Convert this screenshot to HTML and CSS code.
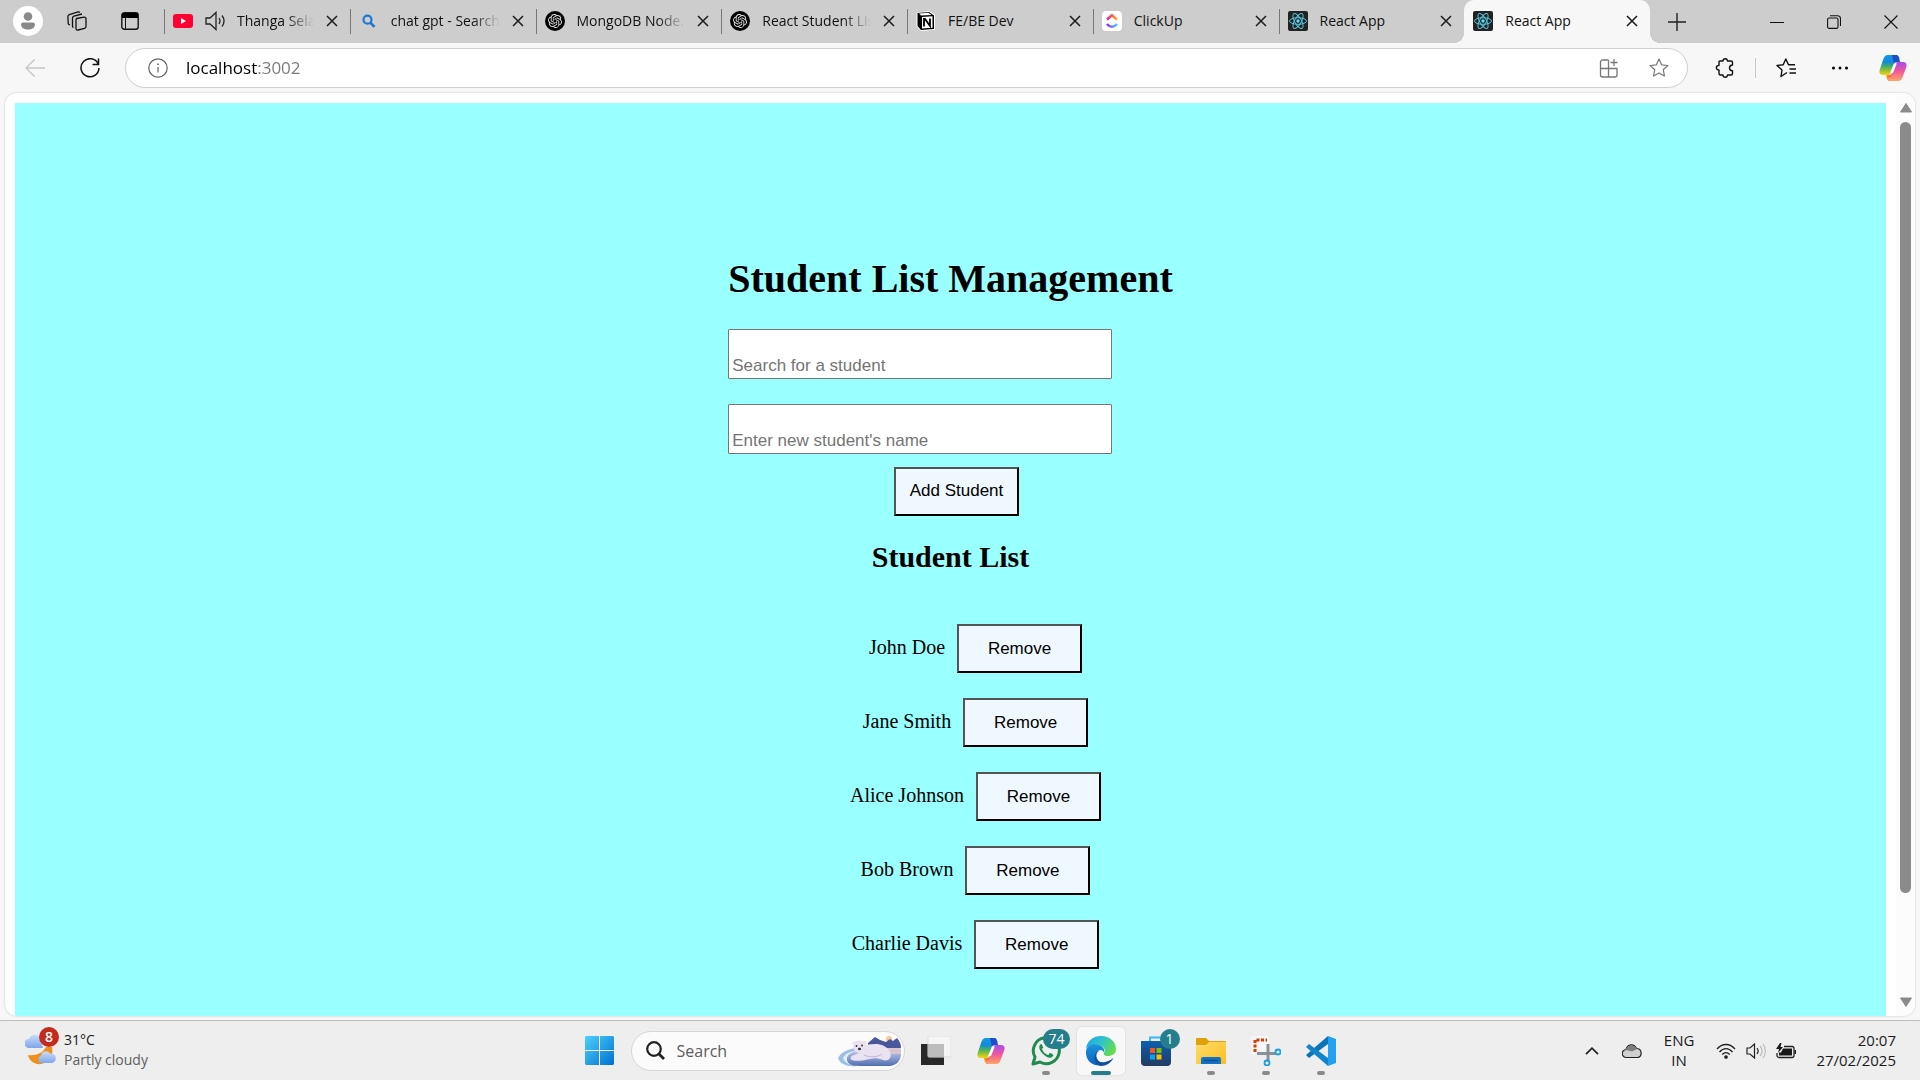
FILE: index.html
```html
<!DOCTYPE html>
<html lang="en">
<head>
<meta charset="utf-8">
<title>React App</title>
<link rel="stylesheet" href="styles.css">
</head>
<body>
<svg class="defs" aria-hidden="true">
  <defs>
    <linearGradient id="cp-blue" x1="0" y1="0" x2="0" y2="1"><stop offset="0" stop-color="#1696ea"/><stop offset=".35" stop-color="#0f8bd8"/><stop offset=".6" stop-color="#4cb25c"/><stop offset="1" stop-color="#f8d30a"/></linearGradient>
    <linearGradient id="cp-pink" x1="0" y1="0" x2="0" y2="1"><stop offset="0" stop-color="#a64cf0"/><stop offset=".5" stop-color="#f2589a"/><stop offset="1" stop-color="#ffa665"/></linearGradient>
    <linearGradient id="cp-red" x1="0" y1="0" x2="1" y2="0"><stop offset="0" stop-color="#f8a01c"/><stop offset="1" stop-color="#e8404c"/></linearGradient>
    <linearGradient id="win" x1="0" y1="0" x2="1" y2="1"><stop offset="0" stop-color="#4fd0fb"/><stop offset="1" stop-color="#0070d0"/></linearGradient>
    <linearGradient id="edge-top" x1="0" y1="0" x2="1" y2=".5"><stop offset="0" stop-color="#1b9de2"/><stop offset=".5" stop-color="#2cc3d0"/><stop offset="1" stop-color="#64dc50"/></linearGradient>
    <linearGradient id="edge-left" x1="0" y1="0" x2="0" y2="1"><stop offset="0" stop-color="#1a96dd"/><stop offset="1" stop-color="#0c62c4"/></linearGradient>
    <linearGradient id="store" x1="0" y1="0" x2="0" y2="1"><stop offset="0" stop-color="#0c5fae"/><stop offset="1" stop-color="#233a63"/></linearGradient>
    <linearGradient id="folder" x1="0" y1="0" x2="1" y2="1"><stop offset="0" stop-color="#ffdd6e"/><stop offset="1" stop-color="#fbbd1a"/></linearGradient>
    <linearGradient id="cloud" x1="0" y1="0" x2="0" y2="1"><stop offset="0" stop-color="#c9dcfa"/><stop offset="1" stop-color="#7ea7e8"/></linearGradient>
    <linearGradient id="click-top" x1="0" y1="0" x2="1" y2="0"><stop offset="0" stop-color="#f0189a"/><stop offset="1" stop-color="#ffb21a"/></linearGradient>
    <linearGradient id="click-bottom" x1="0" y1="0" x2="1" y2="0"><stop offset="0" stop-color="#8930fd"/><stop offset="1" stop-color="#49ccf9"/></linearGradient>
    <linearGradient id="sky" x1="0" y1="0" x2="0" y2="1"><stop offset="0" stop-color="#ccd4f0"/><stop offset=".5" stop-color="#93a4d4"/><stop offset="1" stop-color="#4f6fae"/></linearGradient>
    <symbol id="close" viewBox="0 0 12 12"><path d="M1 1l10 10M11 1L1 11" fill="none" stroke="currentColor" stroke-width="1.5"/></symbol>
    <symbol id="openai" viewBox="0 0 20 20">
      <circle cx="10" cy="10" r="10" fill="#000"/>
      <path transform="translate(3 3) scale(.583)" fill="#e4e4e4" d="M22.2819 9.8211a5.9847 5.9847 0 0 0-.5157-4.9108 6.0462 6.0462 0 0 0-6.5098-2.9A6.0651 6.0651 0 0 0 4.9807 4.1818a5.9847 5.9847 0 0 0-3.9977 2.9 6.0462 6.0462 0 0 0 .7427 7.0966 5.98 5.98 0 0 0 .511 4.9107 6.051 6.051 0 0 0 6.5146 2.9001A5.9847 5.9847 0 0 0 13.2599 24a6.0557 6.0557 0 0 0 5.7718-4.2058 5.9894 5.9894 0 0 0 3.9977-2.9001 6.0557 6.0557 0 0 0-.7475-7.0729zm-9.022 12.6081a4.4755 4.4755 0 0 1-2.8764-1.0408l.1419-.0804 4.7783-2.7582a.7948.7948 0 0 0 .3927-.6813v-6.7369l2.02 1.1686a.071.071 0 0 1 .038.052v5.5826a4.504 4.504 0 0 1-4.4945 4.4944zm-9.6607-4.1254a4.4708 4.4708 0 0 1-.5346-3.0137l.142.0852 4.783 2.7582a.7712.7712 0 0 0 .7806 0l5.8428-3.3685v2.3324a.0804.0804 0 0 1-.0332.0615L9.74 19.9502a4.4992 4.4992 0 0 1-6.1408-1.6464zM2.3408 7.8956a4.485 4.485 0 0 1 2.3655-1.9728V11.6a.7664.7664 0 0 0 .3879.6765l5.8144 3.3543-2.0201 1.1685a.0757.0757 0 0 1-.071 0l-4.8303-2.7865A4.504 4.504 0 0 1 2.3408 7.872zm16.5963 3.8558L13.1038 8.364 15.1192 7.2a.0757.0757 0 0 1 .071 0l4.8303 2.7913a4.4944 4.4944 0 0 1-.6765 8.1042v-5.6772a.79.79 0 0 0-.407-.667zm2.0107-3.0231l-.142-.0852-4.7735-2.7818a.7759.7759 0 0 0-.7854 0L9.409 9.2297V6.8974a.0662.0662 0 0 1 .0284-.0615l4.8303-2.7866a4.4992 4.4992 0 0 1 6.6802 4.66zM8.3065 12.863l-2.02-1.1638a.0804.0804 0 0 1-.038-.0567V6.0742a4.4992 4.4992 0 0 1 7.3757-3.4537l-.142.0805L8.704 5.459a.7948.7948 0 0 0-.3927.6813zm1.0976-2.3654l2.602-1.4998 2.6069 1.4998v2.9994l-2.5974 1.4997-2.6067-1.4997Z"/>
    </symbol>
    <symbol id="react" viewBox="0 0 20 20">
      <rect width="20" height="20" rx="2" fill="#222"/>
      <g fill="none" stroke="#56c5df" stroke-width="1"><ellipse cx="10" cy="10" rx="8.500" ry="3.300"/><ellipse cx="10" cy="10" rx="8.500" ry="3.300" transform="rotate(60 10 10)"/><ellipse cx="10" cy="10" rx="8.500" ry="3.300" transform="rotate(120 10 10)"/></g>
      <circle cx="10" cy="10" r="1.700" fill="#61dafb"/>
    </symbol>
    <symbol id="copilot" viewBox="0 0 28 26">
      <path d="M17 0h-8C6 0 5 2 4 5L1 14c-1.500 4 0 6 3 6h5c2 0 3-1.500 4-5l2.500-8c.8-2.500 2-3 4-3h1C19.500 1.500 19 0 17 0z" fill="url(#cp-blue)"/>
      <path d="M13 0h4c2.500 0 3 2 4 7h-3c-2 0-2.500 1-3 2z" fill="#1c4fc9"/>
      <path d="M15 26h-4c-2.500 0-3-2-4-6h3c2 0 2.600-1 3-2z" fill="url(#cp-red)"/>
      <path d="M11 26h8c3 0 4-2 5-5l3-8c1.500-4 0-6-3-6h-5c-2 0-3 1.500-4 5l-2.500 8c-.8 2.500-2 3-4 3H8c.8 2 1.500 3 3 3z" fill="url(#cp-pink)"/>
      <path d="M15 8.500h2.800L14 18h-3z" fill="#fff"/>
    </symbol>
    <symbol id="star" viewBox="0 0 20 20"><path d="M10 1l2.600 5.800 6.300.7-4.700 4.200 1.300 6.300L10 14.900 4.500 18l1.300-6.300L1.100 7.500l6.300-.7z" fill="none" stroke="currentColor" stroke-width="1.200" stroke-linejoin="round"/></symbol>
  </defs>
</svg>

<div class="browser">
  <header class="tabstrip">
    <div class="tab-tools">
      <button class="avatar" aria-label="Profile"><svg width="14" height="18" viewBox="0 0 14 18"><circle cx="7" cy="4.500" r="4.300" fill="#8a8a8a"/><path d="M2 10.500h10c1 0 2 .8 2 2 0 3-3 5-7 5s-7-2-7-5c0-1.200 1-2 2-2z" fill="#8a8a8a"/></svg></button>
      <button class="plain" aria-label="Workspaces"><svg width="20" height="20" viewBox="0 0 20 20" fill="none" stroke="#111" stroke-width="1.300"><path d="M9.500 7.500l7.500-1.400c1-.2 2 .5 2 1.500v8c0 .8-.5 1.500-1.400 1.700L11 19c-1 .2-2-.6-2-1.600V9z"/><path d="M6.500 16.500c-.7-.2-1-.8-1-1.500V7c0-1 .5-1.600 1.400-1.900L15 3"/><path d="M3 14c-.6-.2-1.500-.8-1.800-1.500L.9 5.500c0-1 .5-1.600 1.400-1.900L11 1c.8-.2 1.500.2 1.800.8"/></svg></button>
      <button class="plain" aria-label="Tab actions"><svg width="18" height="18" viewBox="0 0 18 18"><rect x=".8" y=".8" width="16.400" height="16.400" rx="2.500" fill="none" stroke="#111" stroke-width="1.400"/><path d="M1 6V3a2 2 0 0 1 2-2h12a2 2 0 0 1 2 2v3z" fill="#000"/><path d="M4.500 6v11" stroke="#111"/></svg></button>
    </div>
    <nav class="tabs" aria-label="Tabs">
      <div class="tab"><svg class="favicon" viewBox="0 0 20 20"><rect y="3" width="20" height="14" rx="3" fill="#ff0033"/><path d="M8 7v6l5-3z" fill="#fff"/></svg><svg class="favicon" viewBox="0 0 20 20" fill="none" stroke="#222" stroke-width="1.300"><path d="M1 7h4l6-5.500v17L5 13H1z"/><path d="M14 7c1.300 2 1.300 4 0 6M17 4.500c2.600 3.500 2.600 7.500 0 11"/></svg><span class="title fade">Thanga Sela</span><button class="plain" aria-label="Close tab"><svg class="x"><use href="#close"/></svg></button></div>
      <div class="tab"><svg class="favicon" viewBox="0 0 20 20" fill="none" stroke="#1a78d0" stroke-width="2.200"><circle cx="8.500" cy="8.700" r="4"/><path d="M11.500 11.800l4 4" stroke-width="2.600"/></svg><span class="title fade">chat gpt - Search</span><button class="plain" aria-label="Close tab"><svg class="x"><use href="#close"/></svg></button></div>
      <div class="tab"><svg class="favicon"><use href="#openai"/></svg><span class="title fade">MongoDB Node.</span><button class="plain" aria-label="Close tab"><svg class="x"><use href="#close"/></svg></button></div>
      <div class="tab"><svg class="favicon"><use href="#openai"/></svg><span class="title fade">React Student Lis</span><button class="plain" aria-label="Close tab"><svg class="x"><use href="#close"/></svg></button></div>
      <div class="tab"><svg class="favicon" viewBox="0 0 20 20"><path d="M1 2l12-1.500L18.500 4v14.500L5 19.500 1 15z" fill="#fff" stroke="#fff"/><path d="M1.500 2L13 1l5 3.500V18L5 19l-3.500-4z" fill="#000"/><path d="M3 2.500l9.500-.8 3 2.200-10.500.7zM6 6l10.500-.7v11.500L6 17.500z" fill="#fff"/><path d="M8 15.500V8h1l5 7V7.500" fill="none" stroke="#000" stroke-width="1.800"/></svg><span class="title">FE/BE Dev</span><button class="plain" aria-label="Close tab"><svg class="x"><use href="#close"/></svg></button></div>
      <div class="tab"><svg class="favicon" viewBox="0 0 20 20"><rect width="20" height="20" rx="4" fill="#fff"/><path d="M5 8.500l5-4.300 5 4.300" fill="none" stroke="url(#click-top)" stroke-width="2.600"/><path d="M5 13c3 3.600 7 3.600 10 0" fill="none" stroke="url(#click-bottom)" stroke-width="2.600"/></svg><span class="title">ClickUp</span><button class="plain" aria-label="Close tab"><svg class="x"><use href="#close"/></svg></button></div>
      <div class="tab"><svg class="favicon"><use href="#react"/></svg><span class="title">React App</span><button class="plain" aria-label="Close tab"><svg class="x"><use href="#close"/></svg></button></div>
      <div class="tab active"><svg class="favicon"><use href="#react"/></svg><span class="title">React App</span><button class="plain" aria-label="Close tab"><svg class="x"><use href="#close"/></svg></button></div>
    </nav>
    <button class="plain new-tab" aria-label="New tab"><svg width="18" height="18" viewBox="0 0 18 18"><path d="M9 0v18M0 9h18" stroke="#222" stroke-width="1.400"/></svg></button>
    <div class="window-controls">
      <button class="plain" aria-label="Minimize"><svg width="14" height="14" viewBox="0 0 14 14"><path d="M0 7.500h14" stroke="#111"/></svg></button>
      <button class="plain" aria-label="Restore"><svg width="14" height="14" viewBox="0 0 14 14" fill="none" stroke="#111" stroke-width="1.100"><rect x=".6" y="3" width="10.400" height="10.400" rx="1.500"/><path d="M3 .7h7.500a3 3 0 0 1 3 3V11"/></svg></button>
      <button class="plain" aria-label="Close window"><svg width="14" height="14" viewBox="0 0 14 14"><path d="M.5.5l13 13M13.500.5l-13 13" stroke="#111" stroke-width="1.100"/></svg></button>
    </div>
  </header>

  <div class="toolbar">
    <div class="nav-buttons">
      <button class="plain" aria-label="Back"><svg width="20" height="20" viewBox="0 0 20 20" fill="none" stroke="#c6c6c6" stroke-width="1.300"><path d="M20 10H1M9.500 1.500L1 10l8.500 8.500"/></svg></button>
      <button class="plain" aria-label="Refresh"><svg width="20" height="20" viewBox="0 0 20 20" fill="none" stroke="#111" stroke-width="1.500"><path d="M18.200 6A9 9 0 1 0 19 10M18.500.5V6.500H12.500"/></svg></button>
    </div>
    <div class="address">
      <svg width="20" height="20" viewBox="0 0 20 20" fill="none" stroke="#666" stroke-width="1.200"><circle cx="10" cy="10" r="9.200"/><path d="M10 9v5.500"/><path d="M10 5.500v1.600" stroke-width="1.600"/></svg>
      <input class="url" type="text" aria-label="Address" value="localhost:3002">
      <button class="plain" aria-label="Install app"><svg width="20" height="20" viewBox="0 0 20 20" fill="none" stroke="#777" stroke-width="1.300"><path d="M9.500 2H3.500A2 2 0 0 0 1.500 4v13a2 2 0 0 0 2 2H16a2 2 0 0 0 2-2v-6.500H1.500M9.500 2v17M15 1v7M11.500 4.500h7"/></svg></button>
      <button class="plain" aria-label="Add to favorites"><svg class="muted" width="20" height="20"><use href="#star"/></svg></button>
    </div>
    <div class="tools">
      <button class="plain" aria-label="Extensions"><svg width="20" height="20" viewBox="0 0 20 20" fill="none" stroke="#111" stroke-width="1.400" stroke-linejoin="round"><path d="M5 3h3c.2-3 4.300-3 4.500 0H16a1.500 1.500 0 0 1 1.500 1.500V7c-4 .3-4 5.500 0 5.800V15.500A1.500 1.500 0 0 1 16 17h-3.500c-.2 3-4.300 3-4.500 0H5.500A1.500 1.500 0 0 1 4 15.500V12c-3.500 0-3.500-4.600 0-4.600V4a1 1 0 0 1 1-1z"/></svg></button>
      <span class="divider"></span>
      <button class="plain" aria-label="Favorites"><svg width="20" height="20" viewBox="0 0 20 20" fill="none" stroke="#111" stroke-width="1.400"><path d="M11 14.500L5 18.500l1-6.500L1 7.500l6.200-.7L9.800 1l2.700 5.800H19M13.500 11H20M13.500 15H20" stroke-linejoin="round"/></svg></button>
      <button class="plain more" aria-label="Settings and more"><svg width="18" height="18" viewBox="0 0 18 18"><circle cx="2.500" cy="9" r="1.500"/><circle cx="9" cy="9" r="1.500"/><circle cx="15.500" cy="9" r="1.500"/></svg></button>
      <button class="plain" aria-label="Copilot"><svg width="28" height="26"><use href="#copilot"/></svg></button>
    </div>
  </div>

  <div class="viewport">
    <main class="page">
      <div class="app">
        <h1>Student List Management</h1>
        <input class="field" type="text" aria-label="Search for a student" placeholder="Search for a student">
        <input class="field" type="text" aria-label="New student's name" placeholder="Enter new student's name">
        <button class="btn add">Add Student</button>
        <h2>Student List</h2>
        <ul class="students">
          <li>John Doe<button class="btn">Remove</button></li>
          <li>Jane Smith<button class="btn">Remove</button></li>
          <li>Alice Johnson<button class="btn">Remove</button></li>
          <li>Bob Brown<button class="btn">Remove</button></li>
          <li>Charlie Davis<button class="btn">Remove</button></li>
        </ul>
      </div>
    </main>
    <div class="scrollbar" aria-hidden="true">
      <svg width="12" height="10" viewBox="0 0 12 10"><path d="M6 .5L11.500 9H.5z" fill="#8b8b8b" stroke="#8b8b8b" stroke-linejoin="round"/></svg>
      <div class="track"><div class="thumb"></div></div>
      <svg width="12" height="10" viewBox="0 0 12 10"><path d="M6 9.500L11.500 1H.5z" fill="#8b8b8b" stroke="#8b8b8b" stroke-linejoin="round"/></svg>
    </div>
  </div>
</div>

<footer class="taskbar">
  <button class="plain weather">
    <span class="badged"><svg width="32" height="34" viewBox="0 0 32 34"><path d="M3 24c8 1 15-2 18-8h6c2 9-3 16-11 17C9 34 4 29 3 24z" fill="#f0901c"/><path d="M4 17a4.500 4.500 0 0 1 0-9 6 6 0 0 1 11-1l3 10z" fill="url(#cloud)"/><path d="M16 32a4 4 0 0 1 0-7.500 5 5 0 0 1 9-2 4.500 4.500 0 0 1 2 9.500z" fill="url(#cloud)"/></svg><span class="badge alert">8</span></span>
    <span class="stack"><span>31°C</span><span class="dim">Partly cloudy</span></span>
  </button>
  <div class="apps">
    <button class="plain slot" aria-label="Start"><svg width="29" height="29" viewBox="0 0 29 29" fill="url(#win)"><path d="M1 0h13v14H0V1zM15 0h13l1 1v13H15zM0 15h14v14H1l-1-1zM15 15h14v13l-1 1H15z"/></svg></button>
    <div class="search">
      <svg width="19" height="19" viewBox="0 0 19 19" fill="none" stroke="#222" stroke-width="2.200"><circle cx="8" cy="8" r="6.800"/><path d="M13 13l5 5" stroke-width="2.800"/></svg>
      <input class="search-input" type="text" aria-label="Search" placeholder="Search">
      <svg width="64" height="32" viewBox="0 0 64 32"><path d="M0 23c3-6 10-9 18-10v18C9 32 2 29 0 23z" fill="#9dbfe6"/><path d="M5 23c3-5 8-7 14-7v14C11 30 7 28 5 23z" fill="#e4effb"/><path d="M20 16c4-1 8-3 12-3h30c1 2 1 4 1 6 0 7-5 12-12 12H22C13 31 8 28 9 23c1-4 5-6 11-7z" fill="url(#sky)"/><path d="M44 13h18.500c.5 2 .5 4 .5 6H46z" fill="#d9c3cf"/><circle cx="51" cy="4" r="3" fill="#f6c998"/><path d="M30 8l7-6 5 3 6 2 4-3 3 2 4-3c3 3 4 7 4 10H30z" fill="#4a569c"/><path d="M15 10c-1-2 0-4 2-3.500 3-1.500 6-1.500 8 0 3-1.500 5 1 3 3.500 6-1 13-2 18 1 6 3 8 9 6 12-1 2-4 3-7 2-5-2-9-2-13-1-6 1-12 3-18 1-2-1-2-4 2-5l5-2c-4-1-6-4-6-8z" fill="#ebe2f1"/><path d="M26 20c6 3 14 2 18-1" fill="none" stroke="#c5b4d6"/><circle cx="18.500" cy="11" r=".9" fill="#333"/><circle cx="24" cy="10.500" r=".9" fill="#333"/><ellipse cx="21.500" cy="14" rx="1.600" ry="1.200" fill="#333"/></svg>
    </div>
    <button class="plain slot" aria-label="Task view"><svg width="30" height="30" viewBox="0 0 30 30"><path d="M0 8h23v21H0z" fill="#282828"/><rect x="7" y="0" width="23" height="21" rx="1" fill="#f5f5f5" stroke="#ddd"/><path d="M7 8h16v13H7z" fill="#bdbdbd"/></svg></button>
    <button class="plain slot" aria-label="Copilot"><svg width="28" height="26"><use href="#copilot"/></svg></button>
    <button class="plain slot running" aria-label="WhatsApp"><svg width="30" height="30" viewBox="0 0 30 30"><path d="M2 28l2-7a13 13 0 1 1 5 5z" fill="#eee" stroke="#1e8b50" stroke-width="3" stroke-linejoin="round"/><path d="M10 8c-3 2-2 6 2 10s8 5 10 2c1-1 0-2-3-3-1 0-1 2-2 2-3-1-5-3-6-6 0-1 2-1 1-2-1-2-1-3-2-3z" fill="#1e8b50"/></svg><span class="badge">74</span></button>
    <button class="plain slot running current" aria-label="Microsoft Edge"><svg width="30" height="30" viewBox="0 0 30 30"><path d="M0 13C1 4 8 0 15 0c9 0 15 6 15 13 0 5-4 7-8 7-3 0-5-1-4-3 2-3 0-7-5-8C7 8 2 10 0 13z" fill="url(#edge-top)"/><path d="M0 15C1 10 6 7.500 11 8.500c5 .5 8 4 7 8-1-2-3-3-5-2-4 3-3 8 0 11 3 2 6 2 8 2C11 33-1 27 0 15z" fill="url(#edge-left)"/><path d="M13 14.500c-4 3-4 8 0 11 4 2 10 0 14.500-3.500C25 27 20 30 15 30c-5-1-8-6-6-11 .5-2 2-4 4-4.500z" fill="#12509c"/></svg></button>
    <button class="plain slot" aria-label="Microsoft Store"><svg width="30" height="30" viewBox="0 0 30 30"><path d="M9 6V1.500h12V6" fill="none" stroke="#34b9f3" stroke-width="2"/><path d="M0 5h30v21a4 4 0 0 1-4 4H4a4 4 0 0 1-4-4z" fill="url(#store)"/><path d="M9 12h5v5H9z" fill="#f35325"/><path d="M15.500 12h5v5h-5z" fill="#81bc06"/><path d="M9 18.500h5v5H9z" fill="#05a6f0"/><path d="M15.500 18.500h5v5h-5z" fill="#ffba08"/></svg><span class="badge">1</span></button>
    <button class="plain slot running" aria-label="File Explorer"><svg width="30" height="28" viewBox="0 0 30 28"><path d="M0 2a1 1 0 0 1 1-1h9l3 3h16a1 1 0 0 1 1 1v8H0z" fill="#e0a00c"/><path d="M0 8h10l3-3h17v22H0z" fill="url(#folder)"/><path d="M5 27v-5a2 2 0 0 1 2-2h16a2 2 0 0 1 2 2v5z" fill="#1173c8"/><path d="M8 23.500h14" stroke="#0b4c8e" stroke-width="1.500"/></svg></button>
    <button class="plain slot running" aria-label="Snipping Tool"><svg width="30" height="30" viewBox="0 0 30 30" fill="none"><rect width="18" height="18" rx="2" fill="#f6f6f6"/><path d="M4 16V4h12" stroke="#d83b0b" stroke-width="3" stroke-dasharray="3 1.500"/><path d="M17 8v17M6 17.500h19" stroke="#8a9097" stroke-width="3"/><circle cx="27" cy="16" r="2.500" stroke="#1a9de2" stroke-width="1.800"/><circle cx="16" cy="27" r="2.500" stroke="#1a9de2" stroke-width="1.800"/></svg></button>
    <button class="plain slot running" aria-label="Visual Studio Code"><svg width="30" height="30" viewBox="0 0 30 30"><path d="M22 0L0 19l3 3 19-14z" fill="#0a74b8"/><path d="M3 8l-3 3 22 19v-8z" fill="#1284cc"/><path d="M22 0l8 3v24l-8 3z" fill="#24a0ef"/></svg></button>
  </div>
  <div class="tray">
    <button class="plain" aria-label="Show hidden icons"><svg width="14" height="8" viewBox="0 0 14 8"><path d="M1 7.200l6-6 6 6" fill="none" stroke="#222" stroke-width="1.700"/></svg></button>
    <svg class="onedrive" width="20" height="16" viewBox="0 0 20 16"><path d="M4.500 14.500a4 4 0 0 1-.5-8C5.500 1 12 0 14.500 5.500c6 0 6 9 1 9z" fill="#d0d0d0" stroke="#222" stroke-width="1.200"/><path d="M1.500 10C2 6 5 7 10 8.500l5-2.500C12 0 5 2 4 6z" fill="#7e7e7e"/></svg>
    <span class="stack centered"><span>ENG</span><span>IN</span></span>
    <div class="status">
      <svg width="20" height="16" viewBox="0 0 20 16" fill="none" stroke="#222" stroke-width="1.300"><path d="M1 6c5-6 13-6 18 0M3.500 9c4-4.500 9-4.500 13 0M6.200 11.500c2.500-2.500 5-2.500 7.600 0"/><circle cx="10" cy="14" r="1.200" fill="#222"/></svg>
      <svg width="20" height="16" viewBox="0 0 20 16" fill="none" stroke="#222" stroke-width="1.200"><path d="M1 5h3l4.500-4v14L4 11H1z"/><path d="M11 5c1.500 2 1.500 4 0 6"/><path d="M14 3c2.500 3 2.500 7 0 10M17 1c3.200 4 3.200 10 0 14" stroke="#bbb"/></svg>
      <svg width="20" height="16" viewBox="0 0 20 16"><path d="M8 3.500h8a2 2 0 0 1 2 2v7a2 2 0 0 1-2 2H3a2 2 0 0 1-2-2V10" fill="none" stroke="#222" stroke-width="1.300"/><path d="M7 5.500h9v7H3v-3h2zM18.500 7h1.500v4h-1.500zM4 0L0 6h3L2 10l5-6H4.500l1-4z" fill="#1a1a1a"/></svg>
    </div>
    <span class="stack clock"><span>20:07</span><span>27/02/2025</span></span>
  </div>
</footer>
</body>
</html>
```
FILE: styles.css
```css
* { box-sizing: border-box; }
body {
  margin: 0;
  height: 100vh;
  display: flex;
  flex-direction: column;
  overflow: hidden;
  background: #f7f7f7;
  color: #1b1b1b;
  font-family: "Open Sans", "Noto Sans", sans-serif;
  font-size: 14px;
}
svg { display: block; flex: none; }
.defs { position: absolute; width: 0; height: 0; }
.plain {
  display: flex;
  align-items: center;
  justify-content: center;
  border: 0;
  padding: 0;
  background: none;
  color: inherit;
  font: inherit;
}
.browser { flex: 1; min-height: 0; display: flex; flex-direction: column; }

/* Tab strip */
.tabstrip { display: flex; height: 43px; background: #cdcdcd; }
.tab-tools { display: flex; align-items: center; width: 164px; padding: 0 0 1px 13px; gap: 24px; }
.avatar {
  display: flex;
  align-items: center;
  justify-content: center;
  width: 30px;
  height: 30px;
  padding: 0;
  border: 0;
  border-radius: 50%;
  background: #fff;
}
.tab-tools .plain + .plain { margin-left: 10px; }
.tabs { display: flex; flex: 0 1 1486px; min-width: 0; }
.tab {
  position: relative;
  flex: 1;
  min-width: 0;
  display: flex;
  align-items: center;
  gap: 12px;
  padding: 0 12px 2px 9px;
}
.tab::before {
  content: "";
  position: absolute;
  left: 0;
  top: 9px;
  width: 1px;
  height: 25px;
  background: #777;
}
.favicon { width: 20px; height: 20px; }
.title {
  flex: 1;
  min-width: 0;
  white-space: nowrap;
  line-height: 20px;
  color: #111;
}
.fade { mask-image: linear-gradient(to left, transparent, #000 28px); }
.x { width: 12px; height: 12px; }
.tab.active { background: #f7f7f7; border-radius: 10px 10px 0 0; }
.tab.active::before, .tab.active::after {
  content: "";
  position: absolute;
  top: auto;
  bottom: 0;
  width: 10px;
  height: 10px;
}
.tab.active::before { left: -10px; background: radial-gradient(circle at 0 0, transparent 10px, #f7f7f7 10px); }
.tab.active::after { right: -10px; background: radial-gradient(circle at 100% 0, transparent 10px, #f7f7f7 10px); }
.new-tab { width: 54px; flex: none; }
.window-controls { display: flex; margin-left: auto; padding-right: 1px; }
.window-controls .plain { width: 57px; }

/* Toolbar */
.toolbar { display: flex; align-items: center; height: 50px; }
.nav-buttons { display: flex; width: 125px; padding-left: 25px; gap: 35px; }
.address {
  flex: 1;
  min-width: 0;
  display: flex;
  align-items: center;
  height: 40px;
  padding: 0 18px 0 22px;
  border: 1px solid #cfcfcf;
  border-radius: 20px;
  background: #fff;
}
.url {
  flex: 1;
  min-width: 0;
  margin-left: 18px;
  padding: 0 0 2px;
  border: 0;
  outline: 0;
  font: 17px "Open Sans", "Noto Sans", sans-serif;
  color: transparent;
  background: linear-gradient(90deg, #000 72px, #777 72px);
  background-clip: text;
}
.address .plain { margin-left: 30px; }
.muted { color: #777; }
.tools { display: flex; align-items: center; justify-content: flex-end; width: 232px; padding-right: 13px; gap: 20px; }
.divider { width: 1px; height: 20px; background: #c8c8c8; }
.more { margin: 0 10px 0 15px; }

/* Page area */
.viewport {
  flex: 1;
  min-height: 0;
  display: flex;
  margin: 0 5px 4px;
  border-radius: 12px;
  overflow: hidden;
  background: #fff;
  box-shadow: 0 0 2px #bbb;
}
.page {
  flex: 1;
  margin: 10px 10px 0;
  padding-top: 153px;
  display: flex;
  justify-content: center;
  align-items: flex-start;
  overflow: hidden;
  background: #99ffff;
  font: 20px/24px "Liberation Serif", "Times New Roman", serif;
  color: #000;
}
.app { display: flex; flex-direction: column; align-items: flex-start; }
h1 { margin: 0 0 27px; font-size: 40px; line-height: 46px; }
h2 { margin: 23px 0 49px; align-self: center; font-size: 30px; line-height: 36px; }
.field {
  width: 384px;
  height: 50px;
  margin-bottom: 25px;
  padding: 23px 3px 0;
  border: 1px solid #767676;
  border-radius: 1px;
  background: #fff;
  font: 17px "Liberation Sans", Arial, sans-serif;
}
.field::placeholder { color: #757575; }
.btn {
  width: 125px;
  height: 49px;
  padding: 0;
  border: 2px outset #000;
  background: aliceblue;
  color: #000;
  font: 17px "Liberation Sans", Arial, sans-serif;
}
.add { align-self: center; margin: -12px 0 0 12px; padding-bottom: 2px; }
.students {
  align-self: stretch;
  display: flex;
  flex-direction: column;
  align-items: center;
  gap: 25px;
  margin: 0;
  padding: 0 0 25px 50px;
  list-style: none;
}
.students li { display: flex; align-items: baseline; gap: 12px; }
.scrollbar {
  display: flex;
  flex-direction: column;
  align-items: center;
  width: 19px;
  padding: 10px 0 9px;
  background: #fcfcfc;
}
.track { flex: 1; width: 11px; padding: 9px 0; }
.thumb { height: 89%; border-radius: 6px; background: #8b8b8b; }

/* Taskbar */
.taskbar {
  display: grid;
  grid-template-columns: 1fr auto 1fr;
  align-items: center;
  height: 60px;
  border-top: 1px solid #bdbdbd;
  background: #eee;
}
.weather { justify-self: start; padding-left: 25px; gap: 7px; text-align: left; }
.badged { position: relative; padding-bottom: 6px; }
.stack { display: flex; flex-direction: column; padding-bottom: 2px; line-height: 20px; }
.dim { color: #5f5f5f; }
.badge {
  position: absolute;
  top: 2px;
  right: 0;
  min-width: 20px;
  height: 20px;
  padding: 0 5px;
  border-radius: 10px;
  background: #257e8c;
  color: #fff;
  font-size: 14px;
  line-height: 20px;
  text-align: center;
}
.badge.alert { top: -4px; right: -2px; background: #c42b1c; font-weight: 600; }
.apps { display: flex; align-items: center; gap: 7px; }
.slot { position: relative; width: 48px; height: 48px; border-radius: 5px; }
.running::after {
  content: "";
  position: absolute;
  bottom: 0;
  left: 20px;
  width: 8px;
  height: 4px;
  border-radius: 2px;
  background: #8a8a8a;
}
.current { background: #f8f8f8; box-shadow: 0 0 2px #ccc; }
.current::after { left: 14px; width: 20px; background: #257e8c; }
.search {
  display: flex;
  align-items: center;
  gap: 12px;
  width: 274px;
  height: 40px;
  padding: 0 2px 0 14px;
  border: 1px solid #d6d6d6;
  border-radius: 20px;
  background: #fbfbfb;
}
.search-input {
  flex: 1;
  min-width: 0;
  padding: 0;
  border: 0;
  outline: 0;
  background: none;
  font: 16px "Open Sans", "Noto Sans", sans-serif;
}
.search-input::placeholder { color: #5c5c5c; }
.tray { display: flex; align-items: center; justify-self: end; padding-right: 24px; font-size: 15px; }
.onedrive { margin: 0 22px 0 23px; }
.centered { align-items: center; }
.status { display: flex; gap: 10px; margin: 0 20px 0 22px; }
.clock { align-items: flex-end; }
```
